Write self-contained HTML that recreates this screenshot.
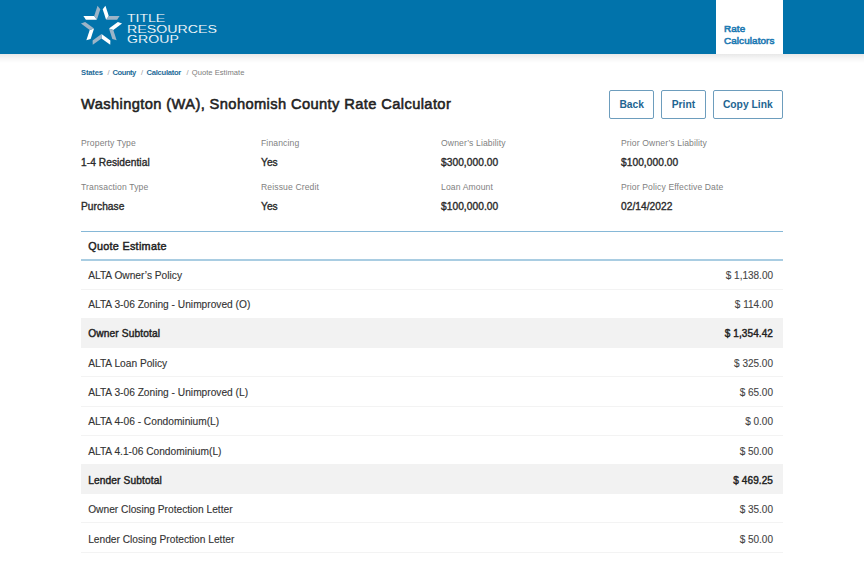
<!DOCTYPE html>
<html><head><meta charset="utf-8">
<style>
*{margin:0;padding:0;box-sizing:border-box}
html,body{width:864px;height:564px;overflow:hidden;background:#fff;font-family:"Liberation Sans",sans-serif;color:#222}
.a{position:absolute;white-space:nowrap;line-height:1}
.btn{position:absolute;top:90px;height:29px;border:1px solid #6d9dbd;border-radius:2px}
</style></head><body>
<div style="position:absolute;left:0;top:0;width:864px;height:54px;background:#0173ab"></div>
<div style="position:absolute;left:0;top:53.6px;width:864px;height:9.4px;background:linear-gradient(#e8e8e8,#f6f6f6 50%,#fff)"></div>
<div style="position:absolute;left:716px;top:0;width:67.3px;height:54px;background:#fff"></div>
<svg style="position:absolute;left:0;top:0" width="864" height="54" viewBox="0 0 864 54">
<g>
<polygon fill="#fff" points="106.10,19.77 102.70,9.30 105.45,5.78 108.79,16.07"/>
<polygon fill="#9cb4c7" points="106.10,19.77 117.10,19.77 119.60,16.07 108.79,16.07"/>
<polygon fill="#fff" points="108.95,28.52 117.85,22.05 122.04,23.58 113.30,29.93"/>
<polygon fill="#9cb4c7" points="108.95,28.52 112.35,38.98 116.64,40.22 113.30,29.93"/>
<polygon fill="#fff" points="101.50,33.93 110.40,40.40 110.25,44.86 101.50,38.50"/>
<polygon fill="#9cb4c7" points="101.50,33.93 92.60,40.40 92.75,44.86 101.50,38.50"/>
<polygon fill="#fff" points="94.05,28.52 90.65,38.98 86.36,40.22 89.70,29.93"/>
<polygon fill="#9cb4c7" points="94.05,28.52 85.15,22.05 80.96,23.58 89.70,29.93"/>
<polygon fill="#fff" points="96.90,19.77 85.90,19.77 83.40,16.07 94.21,16.07"/>
<polygon fill="#9cb4c7" points="96.90,19.77 100.30,9.30 97.55,5.78 94.21,16.07"/>
</g>
<g fill="#fff" font-family="Liberation Sans" font-size="10.0" stroke="#0173ab" stroke-width="0.1">
<text x="127.0" y="22.2" textLength="38.2" lengthAdjust="spacingAndGlyphs">TITLE</text>
<text x="127.0" y="32.8" textLength="90.0" lengthAdjust="spacingAndGlyphs">RESOURCES</text>
<text x="127.0" y="43.2" textLength="51.8" lengthAdjust="spacingAndGlyphs">GROUP</text>
</g>
</svg>
<div class="btn" style="left:609.2px;width:44.6px"></div><div class="btn" style="left:661.3px;width:44.3px"></div><div class="btn" style="left:713.1px;width:69.9px"></div>
<div style="position:absolute;left:81px;top:230.5px;width:702px;height:1.6px;background:#86b8d7"></div>
<div style="position:absolute;left:81px;top:259.1px;width:702px;height:1.6px;background:#a9cde2"></div>
<div style="position:absolute;left:81px;top:288.80px;width:702px;height:1px;background:#f3f3f3"></div>
<div style="position:absolute;left:81px;top:318.00px;width:702px;height:1px;background:#f3f3f3"></div>
<div style="position:absolute;left:81px;top:318.40px;width:702px;height:29.30px;background:#f2f2f2"></div>
<div style="position:absolute;left:81px;top:376.40px;width:702px;height:1px;background:#f3f3f3"></div>
<div style="position:absolute;left:81px;top:405.60px;width:702px;height:1px;background:#f3f3f3"></div>
<div style="position:absolute;left:81px;top:434.80px;width:702px;height:1px;background:#f3f3f3"></div>
<div style="position:absolute;left:81px;top:464.00px;width:702px;height:1px;background:#f3f3f3"></div>
<div style="position:absolute;left:81px;top:464.40px;width:702px;height:29.30px;background:#f2f2f2"></div>
<div style="position:absolute;left:81px;top:522.40px;width:702px;height:1px;background:#f3f3f3"></div>
<div style="position:absolute;left:81px;top:551.60px;width:702px;height:1px;background:#f3f3f3"></div>
<div class="a" style="left:81.00px;top:69.14px;font-size:7.60px;font-weight:bold;color:#1f6c99;letter-spacing:-0.16px;">States</div>
<div class="a" style="left:107.60px;top:69.14px;font-size:7.60px;font-weight:normal;color:#9a9a9a;letter-spacing:0.00px;">/</div>
<div class="a" style="left:112.60px;top:69.14px;font-size:7.60px;font-weight:bold;color:#1f6c99;letter-spacing:-0.49px;">County</div>
<div class="a" style="left:141.10px;top:69.14px;font-size:7.60px;font-weight:normal;color:#9a9a9a;letter-spacing:0.00px;">/</div>
<div class="a" style="left:146.50px;top:69.14px;font-size:7.60px;font-weight:bold;color:#1f6c99;letter-spacing:-0.26px;">Calculator</div>
<div class="a" style="left:186.40px;top:69.14px;font-size:7.60px;font-weight:normal;color:#9a9a9a;letter-spacing:0.00px;">/</div>
<div class="a" style="left:191.80px;top:69.14px;font-size:7.60px;font-weight:normal;color:#7d7d7d;letter-spacing:0.02px;">Quote Estimate</div>
<div class="a" style="left:81.00px;top:96.91px;font-size:14.70px;font-weight:normal;color:#222;letter-spacing:0.38px;-webkit-text-stroke:0.55px #222">Washington (WA), Snohomish County Rate Calculator</div>
<div class="a" style="left:81.00px;top:138.59px;font-size:8.60px;font-weight:normal;color:#7f7f7f;letter-spacing:0.12px;">Property Type</div>
<div class="a" style="left:81.00px;top:157.63px;font-size:10.20px;font-weight:normal;color:#2a2a2a;letter-spacing:0.05px;-webkit-text-stroke:0.36px #2a2a2a">1-4 Residential</div>
<div class="a" style="left:81.00px;top:183.09px;font-size:8.60px;font-weight:normal;color:#7f7f7f;letter-spacing:0.12px;">Transaction Type</div>
<div class="a" style="left:81.00px;top:202.03px;font-size:10.20px;font-weight:normal;color:#2a2a2a;letter-spacing:0.05px;-webkit-text-stroke:0.36px #2a2a2a">Purchase</div>
<div class="a" style="left:261.00px;top:138.59px;font-size:8.60px;font-weight:normal;color:#7f7f7f;letter-spacing:0.12px;">Financing</div>
<div class="a" style="left:261.00px;top:157.63px;font-size:10.20px;font-weight:normal;color:#2a2a2a;letter-spacing:0.05px;-webkit-text-stroke:0.36px #2a2a2a">Yes</div>
<div class="a" style="left:261.00px;top:183.09px;font-size:8.60px;font-weight:normal;color:#7f7f7f;letter-spacing:0.12px;">Reissue Credit</div>
<div class="a" style="left:261.00px;top:202.03px;font-size:10.20px;font-weight:normal;color:#2a2a2a;letter-spacing:0.05px;-webkit-text-stroke:0.36px #2a2a2a">Yes</div>
<div class="a" style="left:441.00px;top:138.59px;font-size:8.60px;font-weight:normal;color:#7f7f7f;letter-spacing:0.12px;">Owner’s Liability</div>
<div class="a" style="left:441.00px;top:157.63px;font-size:10.20px;font-weight:normal;color:#2a2a2a;letter-spacing:0.05px;-webkit-text-stroke:0.36px #2a2a2a">$300,000.00</div>
<div class="a" style="left:441.00px;top:183.09px;font-size:8.60px;font-weight:normal;color:#7f7f7f;letter-spacing:0.12px;">Loan Amount</div>
<div class="a" style="left:441.00px;top:202.03px;font-size:10.20px;font-weight:normal;color:#2a2a2a;letter-spacing:0.05px;-webkit-text-stroke:0.36px #2a2a2a">$100,000.00</div>
<div class="a" style="left:621.00px;top:138.59px;font-size:8.60px;font-weight:normal;color:#7f7f7f;letter-spacing:0.12px;">Prior Owner’s Liability</div>
<div class="a" style="left:621.00px;top:157.63px;font-size:10.20px;font-weight:normal;color:#2a2a2a;letter-spacing:0.05px;-webkit-text-stroke:0.36px #2a2a2a">$100,000.00</div>
<div class="a" style="left:621.00px;top:183.09px;font-size:8.60px;font-weight:normal;color:#7f7f7f;letter-spacing:0.12px;">Prior Policy Effective Date</div>
<div class="a" style="left:621.00px;top:202.03px;font-size:10.20px;font-weight:normal;color:#2a2a2a;letter-spacing:0.05px;-webkit-text-stroke:0.36px #2a2a2a">02/14/2022</div>
<div class="a" style="left:88.20px;top:270.63px;font-size:10.20px;font-weight:normal;color:#333;letter-spacing:0.00px;-webkit-text-stroke:0.12px #333">ALTA Owner’s Policy</div>
<div class="a" style="right:91.00px;top:270.80px;font-size:10.00px;font-weight:normal;color:#444;letter-spacing:0.00px;-webkit-text-stroke:0.1px #444">$ 1,138.00</div>
<div class="a" style="left:88.20px;top:299.95px;font-size:10.20px;font-weight:normal;color:#333;letter-spacing:0.00px;-webkit-text-stroke:0.12px #333">ALTA 3-06 Zoning - Unimproved (O)</div>
<div class="a" style="right:91.00px;top:300.12px;font-size:10.00px;font-weight:normal;color:#444;letter-spacing:0.00px;-webkit-text-stroke:0.1px #444">$ 114.00</div>
<div class="a" style="left:88.20px;top:329.27px;font-size:10.20px;font-weight:normal;color:#222;letter-spacing:0.12px;-webkit-text-stroke:0.42px #222">Owner Subtotal</div>
<div class="a" style="right:91.00px;top:329.44px;font-size:10.00px;font-weight:normal;color:#222;letter-spacing:0.10px;-webkit-text-stroke:0.42px #222">$ 1,354.42</div>
<div class="a" style="left:88.20px;top:358.59px;font-size:10.20px;font-weight:normal;color:#333;letter-spacing:0.00px;-webkit-text-stroke:0.12px #333">ALTA Loan Policy</div>
<div class="a" style="right:91.00px;top:358.76px;font-size:10.00px;font-weight:normal;color:#444;letter-spacing:0.00px;-webkit-text-stroke:0.1px #444">$ 325.00</div>
<div class="a" style="left:88.20px;top:387.91px;font-size:10.20px;font-weight:normal;color:#333;letter-spacing:0.00px;-webkit-text-stroke:0.12px #333">ALTA 3-06 Zoning - Unimproved (L)</div>
<div class="a" style="right:91.00px;top:388.08px;font-size:10.00px;font-weight:normal;color:#444;letter-spacing:0.00px;-webkit-text-stroke:0.1px #444">$ 65.00</div>
<div class="a" style="left:88.20px;top:417.23px;font-size:10.20px;font-weight:normal;color:#333;letter-spacing:0.00px;-webkit-text-stroke:0.12px #333">ALTA 4-06 - Condominium(L)</div>
<div class="a" style="right:91.00px;top:417.40px;font-size:10.00px;font-weight:normal;color:#444;letter-spacing:0.00px;-webkit-text-stroke:0.1px #444">$ 0.00</div>
<div class="a" style="left:88.20px;top:446.55px;font-size:10.20px;font-weight:normal;color:#333;letter-spacing:0.00px;-webkit-text-stroke:0.12px #333">ALTA 4.1-06 Condominium(L)</div>
<div class="a" style="right:91.00px;top:446.72px;font-size:10.00px;font-weight:normal;color:#444;letter-spacing:0.00px;-webkit-text-stroke:0.1px #444">$ 50.00</div>
<div class="a" style="left:88.20px;top:475.87px;font-size:10.20px;font-weight:normal;color:#222;letter-spacing:0.12px;-webkit-text-stroke:0.42px #222">Lender Subtotal</div>
<div class="a" style="right:91.00px;top:476.04px;font-size:10.00px;font-weight:normal;color:#222;letter-spacing:0.10px;-webkit-text-stroke:0.42px #222">$ 469.25</div>
<div class="a" style="left:88.20px;top:505.19px;font-size:10.20px;font-weight:normal;color:#333;letter-spacing:0.00px;-webkit-text-stroke:0.12px #333">Owner Closing Protection Letter</div>
<div class="a" style="right:91.00px;top:505.36px;font-size:10.00px;font-weight:normal;color:#444;letter-spacing:0.00px;-webkit-text-stroke:0.1px #444">$ 35.00</div>
<div class="a" style="left:88.20px;top:534.51px;font-size:10.20px;font-weight:normal;color:#333;letter-spacing:0.00px;-webkit-text-stroke:0.12px #333">Lender Closing Protection Letter</div>
<div class="a" style="right:91.00px;top:534.68px;font-size:10.00px;font-weight:normal;color:#444;letter-spacing:0.00px;-webkit-text-stroke:0.1px #444">$ 50.00</div>
<div class="a" style="left:88.20px;top:240.82px;font-size:10.80px;font-weight:normal;color:#222;letter-spacing:0.30px;-webkit-text-stroke:0.45px #222">Quote Estimate</div>
<div class="a" style="left:619.40px;top:100.15px;font-size:10.30px;font-weight:bold;color:#1e6592;letter-spacing:0.00px;">Back</div>
<div class="a" style="left:671.70px;top:100.15px;font-size:10.30px;font-weight:bold;color:#1e6592;letter-spacing:0.00px;">Print</div>
<div class="a" style="left:722.90px;top:100.15px;font-size:10.30px;font-weight:bold;color:#1e6592;letter-spacing:0.00px;">Copy Link</div>
<div class="a" style="left:724.00px;top:24.09px;font-size:9.90px;font-weight:normal;color:#1f7bb3;letter-spacing:0.10px;-webkit-text-stroke:0.6px #1f7bb3">Rate</div>
<div class="a" style="left:724.00px;top:35.98px;font-size:9.90px;font-weight:normal;color:#1f7bb3;letter-spacing:0.10px;-webkit-text-stroke:0.6px #1f7bb3">Calculators</div>
</body></html>
